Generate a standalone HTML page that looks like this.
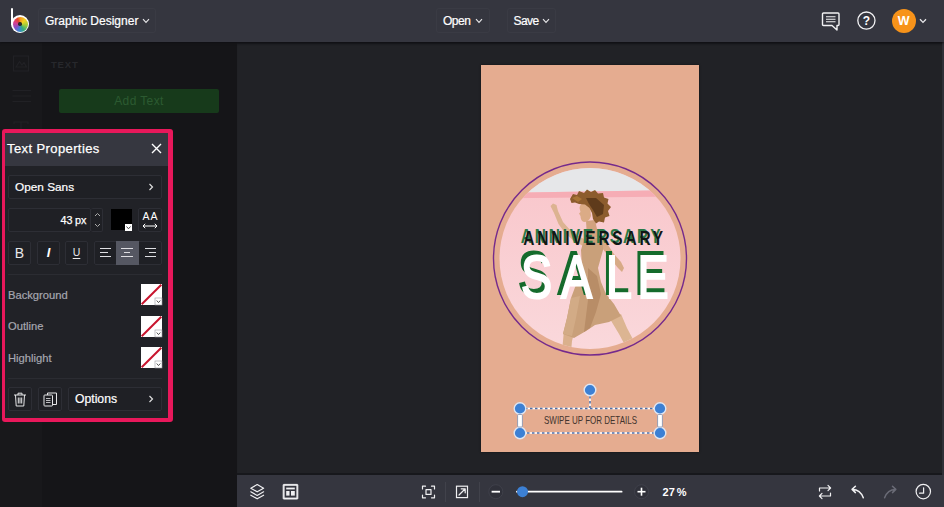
<!DOCTYPE html>
<html lang="en">
<head>
<meta charset="utf-8">
<title>Graphic Designer</title>
<style>
*{box-sizing:border-box;margin:0;padding:0}
html,body{width:944px;height:507px;overflow:hidden;background:#212226;font-family:"Liberation Sans",sans-serif;color:#fff}
.abs{position:absolute}
#top{left:0;top:0;width:944px;height:42px;background:#35363f;z-index:5;box-shadow:0 1px 2px #101014}
#side{left:0;top:42px;width:42px;height:465px;background:#18181b}
#lpanel{left:42px;top:42px;width:195px;height:465px;background:#151518}
#canvas{left:237px;top:42px;width:707px;height:433px;background:#212226;box-shadow:inset 0 -2px 0 #17181c, inset 0 3px 2px -1px #17181c}
#bottom{left:237px;top:475px;width:707px;height:32px;background:#35363f}
.tbtn{position:absolute;top:8px;height:25px;border:1px solid #3a3b44;border-radius:3px}
.ttxt{top:9px;font-size:12px;line-height:25px;color:#fff;white-space:nowrap;-webkit-text-stroke:.2px #fff}
#poster{left:481px;top:65px;width:218px;height:387px;background:#e5ac90;box-shadow:0 0 2px rgba(0,0,0,.55)}
/* text props */
#tp{left:2px;top:129px;width:171px;height:293px;background:#e8185b;border-radius:3px}
#tpin{left:3px;top:4px;width:163px;height:285px;background:#212227}
#tphead{left:0;top:0;width:163px;height:33px;background:#363740;font-size:13px;line-height:31px;color:#fff;padding-left:2px;letter-spacing:.4px;-webkit-text-stroke:.25px #fff}
.box{position:absolute;border:1px solid #2d2e35;border-radius:2px;background:#1f2025}
.lbl{position:absolute;font-size:11.2px;color:#a6a7b0;-webkit-text-stroke:.2px #a6a7b0}
.sw{position:absolute;width:22px;height:22px;background:#fff;overflow:hidden}
</style>
</head>
<body>
<div id="top" class="abs">
  <div class="abs" style="left:11.2px;top:7.8px;width:2px;height:17px;background:#fff;border-radius:1px"></div>
  <div class="abs" style="left:11.2px;top:15.3px;width:18px;height:18px;border-radius:50%;background:#fff"></div>
  <div class="abs" style="left:12.5px;top:16.6px;width:15.4px;height:15.4px;border-radius:50%;background:conic-gradient(from 0deg,#f39a1f 0deg,#f3d41f 45deg,#9bcb3c 100deg,#35ab7b 150deg,#3b84d6 195deg,#8a50c4 240deg,#d53f92 285deg,#e8432d 330deg,#f39a1f 360deg)"></div>
  <div class="abs" style="left:18.2px;top:22.3px;width:3.6px;height:3.6px;border-radius:50%;background:#2a2a2a"></div>
  <div class="tbtn" style="left:38px;width:118px"></div>
  <div class="tbtn" style="left:436px;width:54px"></div>
  <div class="tbtn" style="left:507px;width:49px"></div>
  <div class="ttxt abs" style="left:45px">Graphic Designer</div>
  <div class="ttxt abs" style="left:443px;letter-spacing:-.5px">Open</div>
  <div class="ttxt abs" style="left:513.5px;letter-spacing:-.6px">Save</div>
  <svg class="abs" style="left:142px;top:18px" width="8" height="6" viewBox="0 0 8 6"><path d="M1 1.2 L4 4.4 L7 1.2" stroke="#e8e8ea" stroke-width="1.1" fill="none"/></svg>
  <svg class="abs" style="left:475px;top:18px" width="8" height="6" viewBox="0 0 8 6"><path d="M1 1.2 L4 4.4 L7 1.2" stroke="#e8e8ea" stroke-width="1.1" fill="none"/></svg>
  <svg class="abs" style="left:542px;top:18px" width="8" height="6" viewBox="0 0 8 6"><path d="M1 1.2 L4 4.4 L7 1.2" stroke="#e8e8ea" stroke-width="1.1" fill="none"/></svg>
  <!-- chat -->
  <svg class="abs" style="left:820px;top:10.8px" width="22" height="21" viewBox="0 0 22 21"><path d="M3.5 2 H18 Q19 2 19 3 V13.5 Q19 14.5 18 14.5 H17 V19 L12 14.5 H3.5 Q2.5 14.5 2.5 13.5 V3 Q2.5 2 3.5 2 Z" stroke="#f2f2f4" stroke-width="1.4" fill="none" stroke-linejoin="round"/><path d="M6 5.8 H15.5 M6 8.3 H15.5 M6 10.8 H15.5" stroke="#f2f2f4" stroke-width="1.1"/></svg>
  <!-- help -->
  <svg class="abs" style="left:856px;top:10px" width="21" height="21" viewBox="0 0 21 21"><circle cx="10.4" cy="10.6" r="8.6" stroke="#f2f2f4" stroke-width="1.3" fill="none"/><text x="10.4" y="15" font-family="'Liberation Sans',sans-serif" font-size="12" font-weight="bold" fill="#fff" text-anchor="middle">?</text></svg>
  <!-- avatar -->
  <div class="abs" style="left:891.5px;top:8.7px;width:24.4px;height:24.4px;border-radius:50%;background:#f7931a;color:#fff;font-weight:bold;font-size:12.5px;line-height:24.4px;text-align:center">W</div>
  <svg class="abs" style="left:919px;top:18px" width="8" height="6" viewBox="0 0 8 6"><path d="M1 1.2 L4 4.4 L7 1.2" stroke="#e8e8ea" stroke-width="1.3" fill="none"/></svg>
</div>
<div id="side" class="abs">
  <svg class="abs" style="left:0;top:0" width="42" height="100" viewBox="0 42 42 100"><g stroke="#212125" stroke-width="1.2" fill="none">
    <rect x="13.5" y="56" width="15" height="15"/><path d="M16 67 L19.5 61.5 L22 65 L24 62.5 L26.5 67 Z"/>
    <path d="M12.5 90.5 H31 M12.5 96 H31 M12.5 101.5 H31"/>
    <path d="M14 124 V122 H28 V124 M21 122 V130"/>
  </g></svg>
</div>
<div id="lpanel" class="abs">
  <div class="abs" style="left:9px;top:17px;font-size:9.5px;color:#27282c;letter-spacing:.8px;font-weight:bold">TEXT</div>
  <div class="abs" style="left:17px;top:47px;width:160px;height:24px;background:#173a1b;border-radius:2px;color:#2c5a31;font-size:12px;line-height:24px;letter-spacing:.4px;text-align:center">Add Text</div>
</div>
<div id="canvas" class="abs"></div>
<div class="abs" style="left:942px;top:42px;width:2px;height:433px;background:#2f3037"></div>
<div id="poster" class="abs">
<svg class="abs" style="left:0;top:0" width="218" height="387" viewBox="481 65 218 387">
  <defs>
    <clipPath id="cc"><circle cx="590" cy="258.5" r="90.5"/></clipPath>
    <linearGradient id="wall" x1="0" y1="0" x2="0" y2="1"><stop offset="0" stop-color="#f9c5ca"/><stop offset="1" stop-color="#fad9dc"/></linearGradient>
  </defs>
  <circle cx="590" cy="258.5" r="96.5" fill="none" stroke="#752a8c" stroke-width="1.4"/>
  <g clip-path="url(#cc)">
    <rect x="495" y="165" width="190" height="190" fill="url(#wall)"/>
    <polygon points="495,165 685,165 685,190 495,193" fill="#e6e7e9"/>
    <polygon points="495,193 685,190 685,196.5 495,198.5" fill="#f6adb5"/>
    <!-- back arm -->
    <path d="M601 240 L606 242 L614 254 L621 262 L624 268 L622 272 L618 268 L610 258 L602 248 Z" fill="#d7aa86"/>
    <!-- front arm -->
    <path d="M550.5 206 L553 203.5 L556.5 205 L558 211 L563 222 L571 231 L582 238 L588 241 L585 247 L574 241 L565 233 L558.5 224 L554 213 Z" fill="#dcb391"/>
    <!-- legs -->
    <path d="M564 330 L574 333 L572 341 L571 352 L562 352 L563 341 Z" fill="#dab08c"/>
    <path d="M610 319 L621 314 L627 328 L636 345 L627 349 L619 334 Z" fill="#dcb592"/>
    <!-- dress -->
    <path d="M585 236 L603 239 L603 250 L598 268 L601 282 L606 294 L614 304 L621 316 L609 322 L595 325 L586 331 L574 338 L563 334 L567 318 L571 298 L577 282 L582 268 L581 250 Z" fill="#c9a07a"/>
    <path d="M588 268 L597 276 L601 294 L596 312 L590 328 L584 332 L588 300 Z" fill="#b88d67"/>
    <path d="M571 298 L580 296 L576 318 L572 336 L563 334 L567 318 Z" fill="#d2ab86"/>
    <!-- neck+face -->
    <path d="M586 221 L595 220 L599 238 L587 237 Z" fill="#d2a27e"/>
    <path d="M579.5 208 Q580 203 585 203 L590 206 L591 216 Q589 222 584 222 Q580.5 221 580.5 216 L579 213.5 L580.5 212 Z" fill="#dbab86"/>
    <!-- hair -->
    <path d="M570 199 L573 194 L577 195 L579 191 L584 193 L587 189.5 L591 192 L595 190 L598 193.5 L603 193 L604 197.5 L608.5 199 L607.5 203.5 L611 207 L608 211 L609.5 216 L605 217.500 L604 222.500 L599 221.500 L596 223.500 L593 219 L592 213 L589.5 208 L585 204.500 L579 204 L575 202.500 L571.5 203 Z" fill="#8c5c2d"/>
    <path d="M586 198 L596 198 L604 205 L603 214 L597 217 L593 210 L589 204 Z" fill="#5f3b1b"/>
    <path d="M572 198 L577 196 L582 199 L578 202 Z" fill="#a87436"/>
  </g>
  <g font-family="'Liberation Sans',sans-serif" font-size="19.3" font-weight="bold" letter-spacing="3.5">
    <text transform="translate(520.8 243.2) scale(.8 1)" fill="#2a7a48">ANNIVERSARY</text>
    <text transform="translate(523.3 245) scale(.8 1)" fill="#111614">ANNIVERSARY</text>
  </g>
  <g font-family="'Liberation Sans',sans-serif" font-size="60.5">
    <g fill="#156b2c" stroke="#156b2c" stroke-width="2.2" transform="translate(-3 -4)">
      <text transform="translate(520.9 298) scale(.77 1)">S</text>
      <text transform="translate(561 298) scale(.77 1)">A</text>
      <text transform="translate(606.1 298) scale(.77 1)">L</text>
      <text transform="translate(637.4 298) scale(.77 1)">E</text>
    </g>
    <g fill="#ffffff" stroke="#ffffff" stroke-width="2.2">
      <text transform="translate(520.9 298) scale(.77 1)">S</text>
      <text transform="translate(561 298) scale(.77 1)">A</text>
      <text transform="translate(606.1 298) scale(.77 1)">L</text>
      <text transform="translate(637.4 298) scale(.77 1)">E</text>
    </g>
  </g>
  <text x="590.5" y="424" font-family="'Liberation Sans',sans-serif" font-size="10.4" fill="#43332d" text-anchor="middle" textLength="93" lengthAdjust="spacingAndGlyphs">SWIPE UP FOR DETAILS</text>
  <!-- selection -->
  <g fill="none">
    <rect x="520" y="408.5" width="140" height="24.5" stroke="#ffffff" stroke-width="1.6"/>
    <rect x="520" y="408.5" width="140" height="24.5" stroke="#4f6fa8" stroke-width="1.6" stroke-dasharray="2.5 2.5"/>
    <line x1="590" y1="391" x2="590" y2="408" stroke="#ffffff" stroke-width="1.6"/>
    <line x1="590" y1="391" x2="590" y2="408" stroke="#4f6fa8" stroke-width="1.6" stroke-dasharray="2.5 2.5"/>
  </g>
  <g fill="#3c80d4" stroke="#dfe6f2" stroke-width="1.4">
    <circle cx="520" cy="408.5" r="5.8"/><circle cx="660" cy="408.5" r="5.8"/>
    <circle cx="520" cy="433" r="5.8"/><circle cx="660" cy="433" r="5.8"/>
    <circle cx="590" cy="390" r="5.8"/>
  </g>
  <g fill="#ffffff" stroke="#7d8fb0" stroke-width="0.8">
    <rect x="517.6" y="414.5" width="4.8" height="12.5" rx="1"/>
    <rect x="657.6" y="414.5" width="4.8" height="12.5" rx="1"/>
  </g>
</svg>
</div>
<div id="bottom" class="abs">
<svg class="abs" style="left:0;top:0" width="707" height="32" viewBox="237 475 707 32">
  <g stroke="#f0f0f2" fill="none" stroke-width="1.2" stroke-linejoin="round" stroke-linecap="round">
    <!-- layers -->
    <path d="M257.2 484.6 L263.6 488.2 L257.2 491.8 L250.8 488.2 Z"/>
    <path d="M250.8 491.8 L257.2 495.4 L263.6 491.8"/>
    <path d="M250.8 495.2 L257.2 498.8 L263.6 495.2"/>
    <!-- fit -->
    <path d="M422.5 489 V486.2 H425.5 M431.5 486.2 H434.5 V489 M434.5 495 V497.8 H431.5 M425.5 497.8 H422.5 V495"/>
    <rect x="426" y="489.6" width="5" height="4.8"/>
    <!-- external -->
    <rect x="456.5" y="486.2" width="11" height="11.4" stroke-linejoin="miter"/>
    <path d="M459 495 L465 489 M461.2 488.8 H465.2 V492.8"/>
    <!-- repeat -->
    <path d="M819.5 491 V488 H830.5 M828 485.4 L830.6 488 L828 490.6"/>
    <path d="M830.5 493 V496 H819.5 M822 493.4 L819.4 496 L822 498.6"/>
    <!-- undo -->
    <path d="M855.4 486.2 L852.1 489.4 L855.4 492.6 M852.3 489.4 Q860.4 489.4 863.3 497.8" stroke-width="1.5"/>
    <!-- clock -->
    <circle cx="923.3" cy="491.6" r="7.2"/>
    <path d="M923.6 487.8 V493.2 H919.6"/>
  </g>
  <path d="M892.5 486.2 L895.8 489.4 L892.5 492.6 M895.6 489.4 Q887.5 489.4 884.6 497.8" stroke="#6a6b76" stroke-width="1.5" fill="none" stroke-linecap="round" stroke-linejoin="round"/>
  <!-- template -->
  <rect x="283.2" y="484.4" width="14.6" height="14.6" fill="#f0f0f2" stroke="#f0f0f2" stroke-width="1" rx="0.5"/>
  <rect x="284.6" y="485.8" width="11.8" height="11.8" fill="#35363f"/>
  <rect x="286.2" y="487.6" width="8.6" height="1.8" fill="#f0f0f2"/>
  <rect x="286.2" y="491" width="3.3" height="4.6" fill="#f0f0f2"/>
  <rect x="291" y="491" width="3.8" height="4.6" fill="#f0f0f2"/>
  <!-- dividers -->
  <rect x="445" y="482" width="1" height="20" fill="#41424b"/>
  <rect x="479" y="482" width="1" height="20" fill="#41424b"/>
  <!-- zoom -->
  <circle cx="495.8" cy="491.7" r="7" fill="#30313a" stroke="#43444e" stroke-width="0.8"/>
  <rect x="491.6" y="490.8" width="8.4" height="1.8" fill="#fff"/>
  <circle cx="641.5" cy="491.7" r="7" fill="#30313a" stroke="#43444e" stroke-width="0.8"/>
  <rect x="637.5" y="490.9" width="8" height="1.6" fill="#fff"/><rect x="640.7" y="487.7" width="1.6" height="8" fill="#fff"/>
  <rect x="516" y="490.8" width="106.5" height="1.8" fill="#fff" rx="0.9"/>
  <circle cx="522.5" cy="491.7" r="5.5" fill="#3c80d4"/>
  <text x="662.5" y="495.8" font-family="'Liberation Sans',sans-serif" font-size="11" font-weight="bold" fill="#fff" letter-spacing="0.2">27<tspan dx="1.5">%</tspan></text>
</svg>
</div>

<div id="tp" class="abs">
 <div id="tpin" class="abs">
  <div id="tphead" class="abs">Text Properties</div>
  <svg class="abs" style="left:145.5px;top:10px" width="11" height="11" viewBox="0 0 11 11"><path d="M1 1 L10 10 M10 1 L1 10" stroke="#fff" stroke-width="1.4" fill="none"/></svg>
  <!-- font dropdown -->
  <div class="box" style="left:3px;top:42px;width:154px;height:24px"></div>
  <div class="abs" style="left:10px;top:42px;font-size:11.8px;line-height:24px;color:#fff;-webkit-text-stroke:.2px #fff">Open Sans</div>
  <svg class="abs" style="left:143px;top:50px" width="6" height="8" viewBox="0 0 6 8"><path d="M1.5 1 L4.5 4 L1.5 7" stroke="#ddd" stroke-width="1.2" fill="none"/></svg>
  <!-- size -->
  <div class="box" style="left:3px;top:75px;width:83px;height:24px"></div>
  <div class="box" style="left:86px;top:75px;width:12px;height:24px;border-left:none"></div>
  <div class="abs" style="left:3px;top:75px;width:78.5px;text-align:right;font-size:10.8px;line-height:24px;color:#fff;-webkit-text-stroke:.25px #fff">43<span style="margin-left:2.5px">px</span></div>
  <svg class="abs" style="left:89px;top:79px" width="7" height="16" viewBox="0 0 7 16"><path d="M1 4 L3.5 1.5 L6 4 M1 12 L3.5 14.5 L6 12" stroke="#aaa" stroke-width="1" fill="none"/></svg>
  <!-- color swatch -->
  <div class="abs" style="left:106px;top:76px;width:21px;height:21px;background:#000"></div>
  <div class="abs" style="left:120px;top:91px;width:7px;height:7px;background:#fff"></div>
  <svg class="abs" style="left:120px;top:91px" width="7" height="7" viewBox="0 0 7 7"><path d="M1.5 2.5 L3.5 4.8 L5.5 2.5" stroke="#333" stroke-width="0.9" fill="none"/></svg>
  <!-- AA -->
  <div class="box" style="left:133px;top:75px;width:24px;height:24px"></div>
  <div class="abs" style="left:133px;top:77px;width:24px;text-align:center;font-size:10.5px;line-height:12px;color:#fff;letter-spacing:1px;padding-left:1px">AA</div>
  <svg class="abs" style="left:137px;top:90px" width="16" height="6" viewBox="0 0 16 6"><path d="M1 3 H15 M3.2 0.8 L1 3 L3.2 5.2 M12.8 0.8 L15 3 L12.8 5.2" stroke="#fff" stroke-width="1" fill="none"/></svg>
  <!-- B I U -->
  <div class="box" style="left:3px;top:108px;width:23px;height:24px"></div>
  <div class="box" style="left:32px;top:108px;width:23px;height:24px"></div>
  <div class="box" style="left:60px;top:108px;width:23px;height:24px"></div>
  <div class="abs" style="left:3px;top:108px;width:23px;text-align:center;font-size:14px;line-height:24px;color:#e8e8ea">B</div>
  <div class="abs" style="left:32px;top:108px;width:23px;text-align:center;font-size:13px;line-height:24px;color:#fff;font-style:italic;font-weight:bold">I</div>
  <div class="abs" style="left:60px;top:108px;width:23px;text-align:center;font-size:10.5px;line-height:22px;color:#e8e8ea;text-decoration:underline;text-underline-offset:2px">U</div>
  <!-- align -->
  <div class="box" style="left:89px;top:108px;width:68px;height:24px"></div>
  <div class="abs" style="left:111px;top:108px;width:23px;height:24px;background:#555762"></div>
  <svg class="abs" style="left:89px;top:108px" width="68" height="24" viewBox="0 0 68 24"><g stroke="#dedee2" stroke-width="1" fill="none">
    <path d="M6 7.500 H17 M6 11.500 H14 M6 15.500 H17"/>
    <path d="M27 7.500 H39 M30 11.500 H36 M27 15.500 H39"/>
    <path d="M51 7.500 H62 M55 11.500 H62 M51 15.500 H62"/>
  </g></svg>
  <div class="abs" style="left:3px;top:141px;width:154px;height:1px;background:#2b2c32"></div>
  <!-- labels -->
  <div class="lbl" style="left:3px;top:155.8px">Background</div>
  <div class="lbl" style="left:3px;top:186.8px">Outline</div>
  <div class="lbl" style="left:3px;top:218.8px">Highlight</div>
  <svg class="abs" style="left:136px;top:151px" width="22" height="22" viewBox="0 0 22 22"><rect width="21" height="21" fill="#fff"/><path d="M0.700 20.300 L20.300 0.700" stroke="#c8142d" stroke-width="2"/><rect x="14" y="14" width="7" height="7" fill="#fff" stroke="#9a9aa0" stroke-width="0.6"/><path d="M15.700 16.500 L17.500 18.600 L19.300 16.500" stroke="#444" stroke-width="0.9" fill="none"/></svg>
  <svg class="abs" style="left:136px;top:182.5px" width="22" height="22" viewBox="0 0 22 22"><rect width="21" height="21" fill="#fff"/><path d="M0.700 20.300 L20.300 0.700" stroke="#c8142d" stroke-width="2"/><rect x="14" y="14" width="7" height="7" fill="#fff" stroke="#9a9aa0" stroke-width="0.6"/><path d="M15.700 16.500 L17.500 18.600 L19.300 16.500" stroke="#444" stroke-width="0.9" fill="none"/></svg>
  <svg class="abs" style="left:136px;top:213.5px" width="22" height="22" viewBox="0 0 22 22"><rect width="21" height="21" fill="#fff"/><path d="M0.700 20.300 L20.300 0.700" stroke="#c8142d" stroke-width="2"/><rect x="14" y="14" width="7" height="7" fill="#fff" stroke="#9a9aa0" stroke-width="0.6"/><path d="M15.700 16.500 L17.500 18.600 L19.300 16.500" stroke="#444" stroke-width="0.9" fill="none"/></svg>
  <div class="abs" style="left:3px;top:245px;width:154px;height:1px;background:#2b2c32"></div>
  <!-- bottom row -->
  <div class="box" style="left:3px;top:254px;width:24px;height:24px"></div>
  <div class="box" style="left:33px;top:254px;width:24px;height:24px"></div>
  <div class="box" style="left:63px;top:254px;width:94px;height:24px"></div>
  <div class="abs" style="left:70px;top:254px;font-size:12.2px;line-height:24px;color:#fff;-webkit-text-stroke:.2px #fff">Options</div>
  <svg class="abs" style="left:143px;top:262px" width="6" height="8" viewBox="0 0 6 8"><path d="M1.5 1 L4.5 4 L1.5 7" stroke="#ddd" stroke-width="1.2" fill="none"/></svg>
  <svg class="abs" style="left:8px;top:259px" width="14" height="15" viewBox="0 0 14 15"><g stroke="#e6e6e8" stroke-width="1" fill="none"><path d="M1 3 H13 M5 3 V1.2 H9 V3 M2.5 3 L3.2 14 H10.8 L11.5 3 M5.3 5.5 V11.5 M7 5.5 V11.5 M8.7 5.5 V11.5"/></g></svg>
  <svg class="abs" style="left:38px;top:259px" width="15" height="15" viewBox="0 0 15 15"><g stroke="#e6e6e8" stroke-width="1" fill="none"><rect x="1" y="3" width="8.5" height="11" rx="0.8"/><path d="M4.500 3 V1 H13.500 V12.500 H9.500"/><path d="M3 6.500 H7.500 M3 8.500 H7.500 M3 10.500 H7.500" stroke-width="0.8"/></g></svg>
 </div>
</div>
</body>
</html>
